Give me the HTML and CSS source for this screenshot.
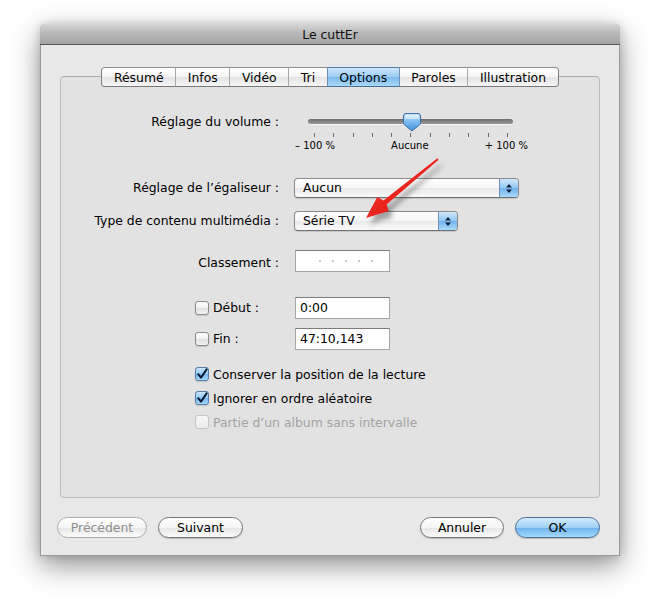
FILE: index.html
```html
<!DOCTYPE html>
<html lang="fr">
<head>
<meta charset="utf-8">
<title>Le cuttEr</title>
<link rel="stylesheet" href="styles.css">
</head>
<body>
<div class="window">
  <div class="titlebar">Le cuttEr</div>
  <div class="content">
    <div class="tabs">
      <span class="tab">Résumé</span>
      <span class="tab">Infos</span>
      <span class="tab">Vidéo</span>
      <span class="tab">Tri</span>
      <span class="tab selected">Options</span>
      <span class="tab">Paroles</span>
      <span class="tab">Illustration</span>
    </div>
    <div class="panel">
      <div class="row row-volume">
        <div class="label">Réglage du volume :</div>
        <div class="slider">
          <div class="track"></div>
          <div class="ticks">
            <i></i><i></i><i></i><i></i><i></i><i></i><i></i><i></i><i></i><i></i><i></i>
          </div>
          <div class="slider-labels">
            <span>– 100 %</span><span>Aucune</span><span>+ 100 %</span>
          </div>
          <svg class="thumb" width="20" height="20" viewBox="0 0 20 20">
            <defs>
              <linearGradient id="tg" x1="0" y1="0" x2="0" y2="1">
                <stop offset="0" stop-color="#cfe6fb"/>
                <stop offset="0.45" stop-color="#7fbdf2"/>
                <stop offset="1" stop-color="#3f8fe0"/>
              </linearGradient>
            </defs>
            <path d="M4 1.5 H16 Q18.5 1.5 18.5 4 V12 L10 19 L1.5 12 V4 Q1.5 1.5 4 1.5 Z" fill="url(#tg)" stroke="#3e6fa6" stroke-width="1"/>
            <path d="M4.5 3 H15.5 Q17 3 17 5 V7 H3 V5 Q3 3 4.5 3 Z" fill="#ffffff" opacity="0.45"/>
          </svg>
        </div>
      </div>

      <div class="row row-eq">
        <div class="label">Réglage de l’égaliseur :</div>
        <div class="popup popup-eq"><span class="popup-text">Aucun</span><span class="popup-arrows"><svg width="8" height="11" viewBox="0 0 8 11"><path d="M4 1 L7 4.5 H1 Z M4 10 L7 6.5 H1 Z" fill="#10223a"/></svg></span></div>
      </div>

      <div class="row row-media">
        <div class="label">Type de contenu multimédia :</div>
        <div class="popup popup-media"><span class="popup-text">Série TV</span><span class="popup-arrows"><svg width="8" height="11" viewBox="0 0 8 11"><path d="M4 1 L7 4.5 H1 Z M4 10 L7 6.5 H1 Z" fill="#10223a"/></svg></span></div>
      </div>

      <div class="row row-rating">
        <div class="label">Classement :</div>
        <div class="field rating"><i></i><i></i><i></i><i></i><i></i></div>
      </div>

      <div class="row row-start">
        <div class="label label-check"><span class="checkbox"></span>Début :</div>
        <div class="field">0:00</div>
      </div>

      <div class="row row-end">
        <div class="label label-check"><span class="checkbox"></span>Fin :</div>
        <div class="field">47:10,143</div>
      </div>

      <div class="checks">
        <div class="check-row"><span class="checkbox checked"><svg width="12" height="12" viewBox="0 0 12 12"><path d="M2.2 6.2 L5 9.6 L10.6 1.4" fill="none" stroke="#0a1a33" stroke-width="2" stroke-linecap="round" stroke-linejoin="round"/></svg></span>Conserver la position de la lecture</div>
        <div class="check-row"><span class="checkbox checked"><svg width="12" height="12" viewBox="0 0 12 12"><path d="M2.2 6.2 L5 9.6 L10.6 1.4" fill="none" stroke="#0a1a33" stroke-width="2" stroke-linecap="round" stroke-linejoin="round"/></svg></span>Ignorer en ordre aléatoire</div>
        <div class="check-row disabled"><span class="checkbox"></span>Partie d’un album sans intervalle</div>
      </div>
    </div>

    <div class="buttons">
      <div class="btn-group">
        <span class="btn disabled btn-prev">Précédent</span>
        <span class="btn btn-next">Suivant</span>
      </div>
      <div class="btn-group">
        <span class="btn btn-cancel">Annuler</span>
        <span class="btn default btn-ok">OK</span>
      </div>
    </div>
  </div>
</div>

<svg class="annotation" width="660" height="613" viewBox="0 0 660 613">
  <defs>
    <filter id="blur" x="-20%" y="-20%" width="140%" height="140%">
      <feGaussianBlur stdDeviation="2.5"/>
    </filter>
    <linearGradient id="rg" x1="0" y1="0" x2="1" y2="1">
      <stop offset="0" stop-color="#ff3b30"/>
      <stop offset="1" stop-color="#d40f0a"/>
    </linearGradient>
  </defs>
  <g transform="translate(4,6)" filter="url(#blur)" opacity="0.45">
    <polygon points="438.6,159.8 437.4,158.2 383.4,200.6 377.3,197.1 366,218 388.7,211.1 386.6,204.4" fill="#333"/>
  </g>
  <polygon points="438.6,159.8 437.4,158.2 383.4,200.6 377.3,197.1 366,218 388.7,211.1 386.6,204.4" fill="url(#rg)"/>
</svg>
</body>
</html>
```

FILE: styles.css
```css
html, body {
  margin: 0;
  padding: 0;
  background: #ffffff;
}

body {
  width: 660px;
  height: 613px;
  overflow: hidden;
  position: relative;
  font-family: "DejaVu Sans", "Liberation Sans", sans-serif;
  font-size: 12.4px;
  color: #000;
}

.window {
  margin: 24px 0 0 40px;
  width: 580px;
  height: 532px;
  background: #e8e8e8;
  box-sizing: border-box;
  border: 1px solid #9a9a9a;
  border-top: none;
  border-radius: 5px 5px 0 0;
  box-shadow: 0 10px 28px rgba(0, 0, 0, 0.42), 0 0 10px rgba(0, 0, 0, 0.16);
}

.titlebar {
  height: 21px;
  box-sizing: border-box;
  border-bottom: 1px solid #575757;
  border-radius: 5px 5px 0 0;
  background: linear-gradient(#d6d6d6, #b9b9b9 45%, #a3a3a3);
  text-align: center;
  line-height: 21px;
  font-size: 12.4px;
  color: #111;
  margin: 0 -1px;
}

.content {
  padding: 0 19px;
}

/* Tabs */
.tabs {
  display: flex;
  justify-content: center;
  margin-top: 22px;
  position: relative;
  z-index: 1;
}

.tab {
  height: 20px;
  line-height: 19px;
  box-sizing: border-box;
  padding: 0 11.6px;
  background: linear-gradient(#ffffff, #f4f4f4 50%, #e4e4e4 51%, #f5f5f5);
  border-top: 1px solid #8d8d8d;
  border-bottom: 1px solid #7a7a7a;
  border-left: 1px solid #a9a9a9;
}

.tab:first-child {
  border-left: 1px solid #7f7f7f;
  border-radius: 4px 0 0 4px;
}

.tab:last-child {
  border-right: 1px solid #7f7f7f;
  border-radius: 0 4px 4px 0;
}

.tab.selected {
  background: linear-gradient(#cbe5fb, #9bcdf5 50%, #7cbbf0 51%, #a8d8fa);
  border-top-color: #5a7da5;
  border-bottom-color: #4f6f96;
  border-left-color: #6f8fb5;
}

.tab.selected + .tab {
  border-left-color: #6f8fb5;
}

/* Panel */
.panel {
  margin-top: -11px;
  height: 422px;
  box-sizing: border-box;
  border: 1px solid #bcbcbc;
  border-top-color: #a9a9a9;
  border-radius: 4px;
  background: #e2e2e2;
  padding-top: 35px;
}

.row {
  display: flex;
  align-items: center;
}

.label {
  width: 218px;
  flex: none;
  text-align: right;
  margin-right: 15px;
  line-height: 20px;
}

.row-volume {
  align-items: flex-start;
}

.row-eq { margin-top: 27px; }
.row-media { margin-top: 13px; }
.row-rating { margin-top: 19px; }
.row-rating .label { align-self: flex-end; line-height: 18px; }
.row-start { margin-top: 25px; }
.row-end { margin-top: 9px; }

/* Slider */
.slider {
  position: relative;
  width: 236px;
  height: 39px;
}

.track {
  margin: 7px 17px 0 14px;
  height: 5px;
  border-radius: 3px;
  background: linear-gradient(#6e6e6e, #9a9a9a);
  box-shadow: 0 1px 0 rgba(255, 255, 255, 0.7);
}

.ticks {
  display: flex;
  justify-content: space-between;
  margin: 9px 22px 0 20px;
  height: 4px;
}

.ticks i {
  width: 1px;
  height: 4px;
  background: #6a6a6a;
}

.slider-labels {
  display: flex;
  justify-content: space-between;
  margin: 3px 2px 0 1px;
  font-size: 10px;
  line-height: 12px;
}

.thumb {
  position: absolute;
  left: 108px;
  top: 0;
}

/* Popups */
.popup {
  height: 20px;
  box-sizing: border-box;
  border: 1px solid #8a8a8a;
  border-bottom-color: #6f6f6f;
  border-radius: 4px;
  background: linear-gradient(#ffffff, #f6f6f6 50%, #e9e9e9 51%, #fafafa);
  display: flex;
  align-items: center;
  overflow: hidden;
  box-shadow: 0 1px 1px rgba(0, 0, 0, 0.12);
}

.popup-eq { width: 225px; }
.popup-media { width: 164px; }

.popup-text {
  flex: 1;
  padding-left: 8px;
  line-height: 18px;
}

.popup-arrows {
  width: 18px;
  height: 18px;
  border-left: 1px solid #6f8fb5;
  background: linear-gradient(#cfe7fb, #92c8f3 50%, #70b2ee 51%, #a9dafb);
  display: flex;
  align-items: center;
  justify-content: center;
}

/* Fields */
.field {
  width: 95px;
  height: 22px;
  box-sizing: border-box;
  margin-left: 1px;
  background: #ffffff;
  border: 1px solid #a6a6a6;
  border-top-color: #7c7c7c;
  padding-left: 4px;
  line-height: 20px;
}

.rating {
  display: flex;
  align-items: center;
  gap: 11px;
  padding-left: 23px;
}

.rating i {
  width: 2px;
  height: 2px;
  border-radius: 1px;
  background: #b9b9b9;
}

.label-check {
  text-align: left;
  padding-left: 134px;
  width: 84px;
  display: flex;
  align-items: center;
}

/* Checkboxes */
.checkbox {
  width: 14px;
  height: 14px;
  box-sizing: border-box;
  border: 1px solid #8a8a8a;
  border-radius: 3px;
  background: linear-gradient(#ffffff, #f0f0f0 50%, #dedede 51%, #f4f4f4);
  margin-right: 4px;
  display: inline-flex;
  align-items: center;
  justify-content: center;
  flex: none;
  box-shadow: 0 1px 1px rgba(0, 0, 0, 0.12);
}

.checkbox.checked {
  border-color: #5a7ba3;
  background: linear-gradient(#cbe5fb, #94c9f4 50%, #72b4ef 51%, #a6d8fb);
}

.checks {
  margin-top: 12px;
  padding-left: 134px;
}

.check-row {
  height: 24px;
  display: flex;
  align-items: center;
}

.check-row.disabled {
  color: #a3a3a3;
}

.check-row.disabled .checkbox {
  border-color: #c4c4c4;
  background: linear-gradient(#f7f7f7, #ececec);
  box-shadow: none;
}

/* Buttons */
.buttons {
  display: flex;
  justify-content: space-between;
  margin: 19px 0 0 -3px;
}

.btn-group {
  display: flex;
  gap: 11px;
}

.btn {
  display: inline-block;
  height: 21px;
  box-sizing: border-box;
  line-height: 19px;
  text-align: center;
  border: 1px solid #777;
  border-radius: 11px;
  background: linear-gradient(#ffffff, #f5f5f5 50%, #e6e6e6 51%, #fbfbfb);
  box-shadow: 0 1px 1px rgba(0, 0, 0, 0.2);
}

.btn-prev { width: 90px; }
.btn-next { width: 85px; }
.btn-cancel { width: 84px; }
.btn-ok { width: 85px; }

.btn.disabled {
  color: #8e8e8e;
  border-color: #ababab;
  box-shadow: none;
}

.btn.default {
  border-color: #49709f;
  background: linear-gradient(#d5ebfc, #9dd0f6 50%, #6cb1ee 51%, #a4dbfc);
}

.annotation {
  position: absolute;
  left: 0;
  top: 0;
  pointer-events: none;
}
```
